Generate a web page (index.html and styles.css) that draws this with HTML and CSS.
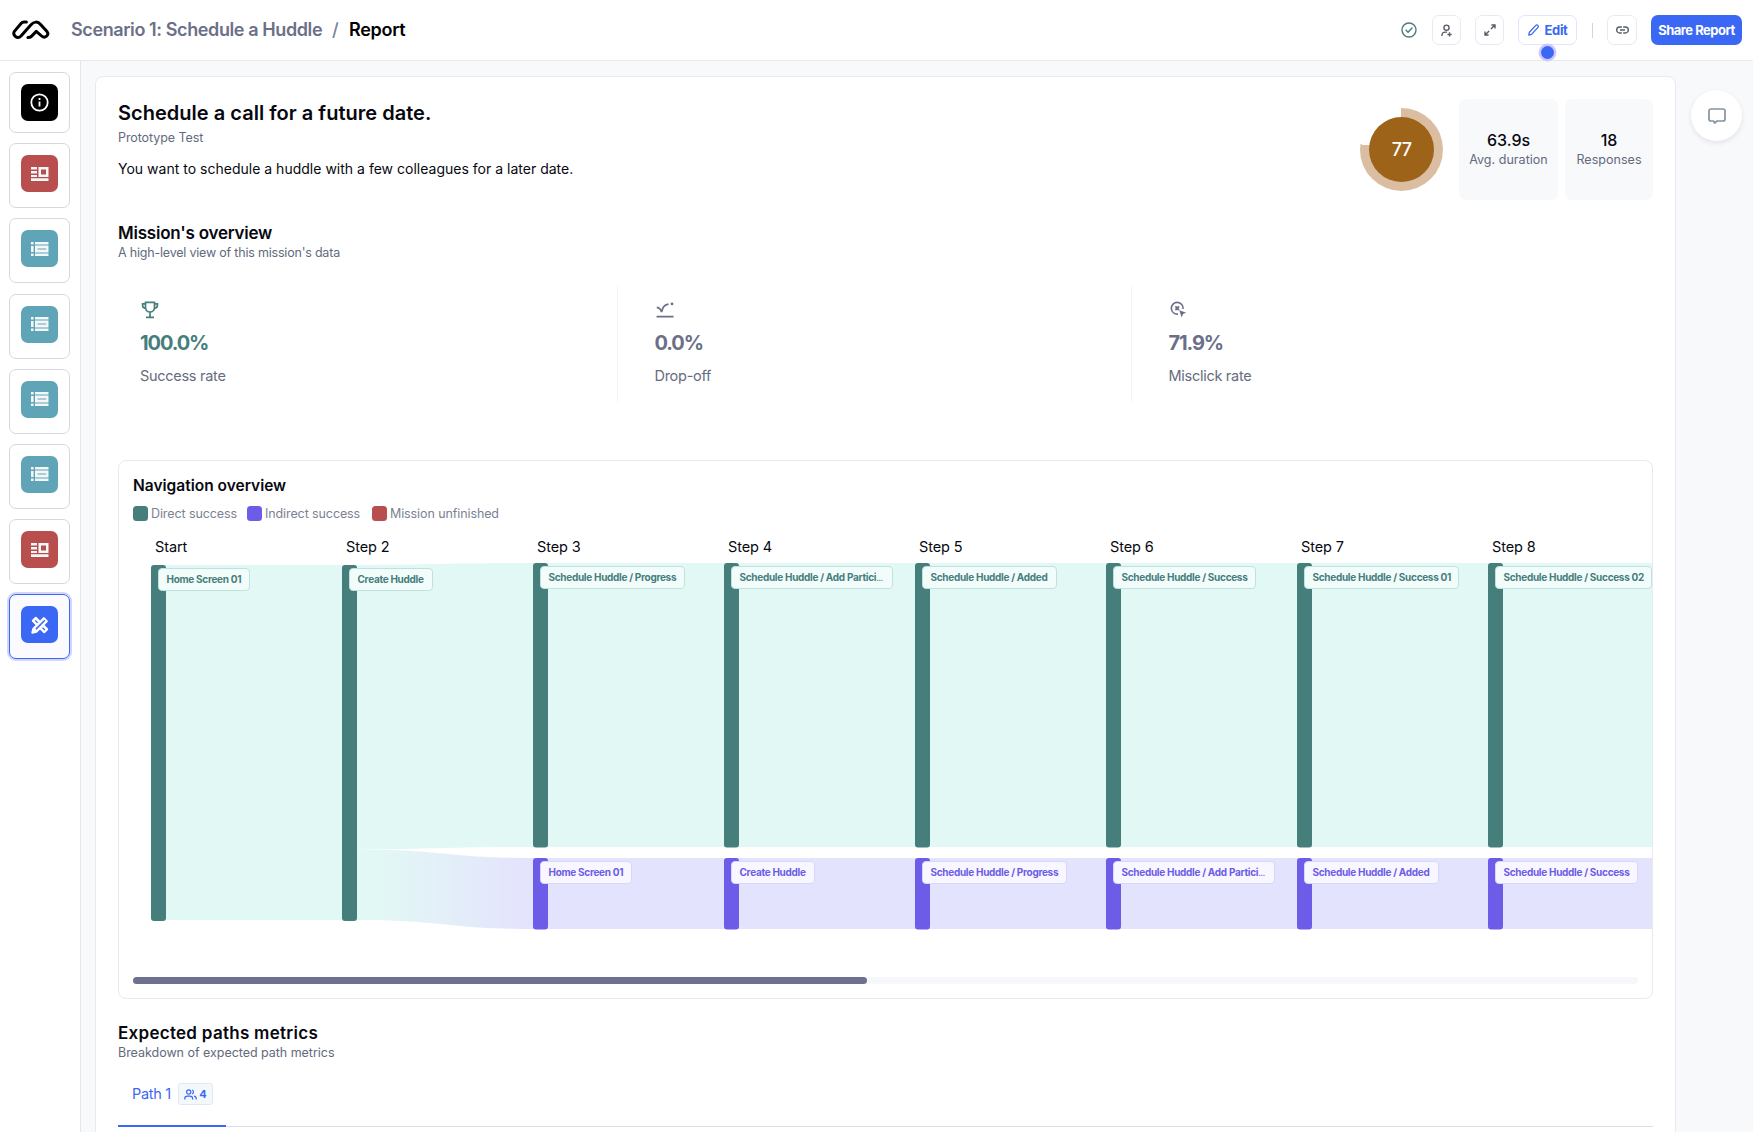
FILE: index.html
```html
<!DOCTYPE html>
<html lang="en">
<head>
<meta charset="utf-8">
<title>Scenario 1: Schedule a Huddle / Report</title>
<link rel="stylesheet" href="styles.css">
</head>
<body>
<svg class="defs" width="0" height="0" aria-hidden="true">
  <symbol id="i-context" viewBox="0 0 18 14"><path d="M0 0h6v2.6H0zM0 4h6v2.6H0zM0 8h6v2H0zM0 11.2h17.500V14H0z"/><path fill-rule="evenodd" d="M7.500 0h10v10h-10zM10 2.600v4.800h5V2.600z"/></symbol>
  <symbol id="i-list" viewBox="0 0 18 14"><path d="M0 0h2.6v2.6H0zM4 0h13.500v2.600H4zM0 4h2.600v6H0zM0 11.400h2.600V14H0zM4 11.400h13.500V14H4z"/><path fill-rule="evenodd" d="M4 3.600h13.500v6.800H4zM6.500 6.400v1.200h8.800V6.400z"/></symbol>
</svg>

<header class="topbar">
  <svg class="logo" viewBox="0 0 38 20" fill="none" stroke="#000" stroke-width="3" stroke-linecap="round" stroke-linejoin="round"><path d="M14.4 2.1 H12.2 C10.7 2.1 9.8 2.6 8.8 3.8 L2.6 11.1 C-.4 14.6 5.2 19.8 9 16 L19 4.8 C21.8 1.4 25.8 1.2 28.6 4.4 L35 11.6 C37.6 15 33 19 29.6 16 L24.3 11.4 L19.4 16.4 C18.4 17.4 17.6 17.6 15.9 17.6"/></svg>
  <nav class="crumbs"><span class="crumb-link">Scenario 1: Schedule a Huddle</span><span class="crumb-sep">/</span><span class="crumb-now">Report</span></nav>
  <div class="actions">
    <svg class="saved" viewBox="0 0 16 16" fill="none" stroke="#467e7c" stroke-width="1.4" stroke-linecap="round" stroke-linejoin="round"><circle cx="8" cy="8" r="7"/><path d="M5 8.3l2.1 2L11 6"/></svg>
    <button class="btn people"><svg width="11" height="13" viewBox="0 0 12 14" fill="none" stroke="#565c68" stroke-width="1.5"><circle cx="6" cy="3.9" r="2.8"/><path d="M1 13v-.8C1 10 2.6 8.800 5 8.800h1.600M9.300 9v4.600M7 11.300h4.600"/></svg></button>
    <button class="btn expand"><svg width="12" height="12" viewBox="0 0 12 12" fill="none" stroke="#565c68" stroke-width="1.4"><path d="M7.400 1H11v3.600M11 1L6.900 5.100M4.600 11H1V7.400M1 11l4.100-4.100"/></svg></button>
    <button class="btn edit"><svg width="11" height="12" viewBox="0 0 11 12" fill="none" stroke="#3b67f5" stroke-width="1.3" stroke-linejoin="round"><path d="M.8 11.200l.6-3L7.800 1.400c.7-.8 1.600-.6 2.100 0 .6.6.6 1.400 0 2L3.600 10.400z"/></svg><span>Edit</span><i class="pulse"></i></button>
    <i class="divider"></i>
    <button class="btn link"><svg width="13" height="8" viewBox="0 0 13 8" fill="none" stroke="#565c68" stroke-width="1.4"><path d="M5.800 1H3.700a3 3 0 000 6h2.100M7.200 1h2.100a3 3 0 010 6H7.200M4 4h5"/></svg></button>
    <button class="share"><span>Share Report</span></button>
  </div>
</header>

<div class="body">
  <aside class="rail">
    <a class="block first"><span class="tile black"><svg width="19" height="19" viewBox="0 0 19 19" fill="none" stroke="#fff" stroke-width="1.8"><circle cx="9.5" cy="9.5" r="8.2"/><path d="M9.500 8.400v5.200M9.500 5v2"/></svg></span></a>
    <a class="block"><span class="tile red"><svg width="18" height="14"><use href="#i-context"/></svg></span></a>
    <a class="block"><span class="tile teal"><svg width="18" height="14"><use href="#i-list"/></svg></span></a>
    <a class="block"><span class="tile teal"><svg width="18" height="14"><use href="#i-list"/></svg></span></a>
    <a class="block"><span class="tile teal"><svg width="18" height="14"><use href="#i-list"/></svg></span></a>
    <a class="block"><span class="tile teal"><svg width="18" height="14"><use href="#i-list"/></svg></span></a>
    <a class="block"><span class="tile red"><svg width="18" height="14"><use href="#i-context"/></svg></span></a>
    <a class="block active"><span class="tile blue"><svg width="18" height="18" viewBox="0 0 18 18" fill="none" stroke="#fff" stroke-linejoin="round"><path stroke-width="2" d="M1.800 4.800L4.800 1.800L16.200 13.200L13.200 16.200z" fill="#fff"/><path stroke="#3b67f5" stroke-width="1.300" d="M4.200 4.400l2.600 2.600M11.500 11.600l2.400 2.400"/><path stroke-width="2.200" d="M12.800 2.200l3 3L5.300 15.600l-3.900 1 1-3.900z" fill="#fff"/><path stroke="#3b67f5" stroke-width="1.500" d="M13.800 4.300L5 13.100"/></svg></span></a>
  </aside>

  <main class="main">
    <article class="card">
      <section class="intro">
        <div class="intro-text">
          <h1>Schedule a call for a future date.</h1>
          <p class="kind">Prototype Test</p>
          <p class="brief">You want to schedule a huddle with a few colleagues for a later date.</p>
        </div>
        <div class="score"><b>77</b></div>
        <div class="stat duration"><strong>63.9s</strong><span>Avg. duration</span></div>
        <div class="stat responses"><strong>18</strong><span>Responses</span></div>
      </section>

      <h2 class="mission">Mission's overview</h2>
      <p class="sub mission-sub">A high-level view of this mission's data</p>

      <section class="metrics">
        <div class="metric success">
          <svg width="18" height="18" viewBox="0 0 18 18" fill="none" stroke="#467e7c" stroke-width="1.7"><path d="M4.500 1.300h9v5.200a4.500 4.500 0 01-9 0zM4.500 2.800H1.600v1.400c0 2 1.200 3 3 3.100M13.500 2.800h2.900v1.400c0 2-1.200 3-3 3.100M9 11v5M5 16.300h8"/></svg>
          <strong>100.0%</strong><span>Success rate</span>
        </div>
        <div class="metric">
          <svg width="18" height="18" viewBox="0 0 18 18" fill="none" stroke="#6b6f88" stroke-width="1.7"><path d="M.5 15.600h17M.8 6.400c2.400.4 4 1.800 4.800 4.600C6.400 6.500 8 3.600 12.500 3.100"/><circle cx="16" cy="2.900" r="1.400" fill="#6b6f88" stroke="none"/></svg>
          <strong>0.0%</strong><span>Drop-off</span>
        </div>
        <div class="metric">
          <svg width="18" height="18" viewBox="0 0 18 18" fill="none" stroke="#6b6f88" stroke-width="1.600"><path d="M8 13.100A5.900 5.900 0 1113.100 8"/><path d="M5.400 5.400l3.600 3.600M9 5.400L5.400 9" stroke-width="1.800"/><path d="M9.200 9.200l7 2.600-3.200 1.300-1.300 3.400z" fill="#6b6f88" stroke="none"/></svg>
          <strong>71.9%</strong><span>Misclick rate</span>
        </div>
      </section>

      <section class="nav-card">
        <h3>Navigation overview</h3>
        <ul class="legend">
          <li class="direct"><i></i><span>Direct success</span></li>
          <li class="indirect"><i></i><span>Indirect success</span></li>
          <li class="unfinished"><i></i><span>Mission unfinished</span></li>
        </ul>
        <div class="flow">
          <svg class="bands" width="1520" height="380" viewBox="0 0 1520 380">
            <defs><linearGradient id="shift"><stop offset="0" stop-color="#e2f8f5"/><stop offset=".12" stop-color="#e2f8f5"/><stop offset="1" stop-color="#e4e3fd"/></linearGradient></defs>
            <path fill="#e2f8f5" d="M25 4H209V359H25zM209 4C305 4 305 2 400 2H1520V286H400C305 286 305 288.500 209 288.500z"/>
            <path fill="url(#shift)" d="M224 288.500C312 288.500 312 297 400 297V368C312 368 312 359 224 359z"/>
            <path fill="#e4e3fd" d="M400 297H1520V368H400z"/>
            <g fill="#467e7c">
              <rect x="18" y="4" width="15" height="356" rx="3"/><rect x="209" y="4" width="15" height="356" rx="3"/>
              <rect x="400" y="2" width="15" height="284.500" rx="3"/><rect x="591" y="2" width="15" height="284.500" rx="3"/><rect x="782" y="2" width="15" height="284.500" rx="3"/><rect x="973" y="2" width="15" height="284.500" rx="3"/><rect x="1164" y="2" width="15" height="284.500" rx="3"/><rect x="1355" y="2" width="15" height="284.500" rx="3"/>
            </g>
            <g fill="#6c5ce7">
              <rect x="400" y="297" width="15" height="71.500" rx="3"/><rect x="591" y="297" width="15" height="71.500" rx="3"/><rect x="782" y="297" width="15" height="71.500" rx="3"/><rect x="973" y="297" width="15" height="71.500" rx="3"/><rect x="1164" y="297" width="15" height="71.500" rx="3"/><rect x="1355" y="297" width="15" height="71.500" rx="3"/>
            </g>
          </svg>
          <div class="step"><span class="step-name">Start</span><span class="tag low" style="width:92px">Home Screen 01</span></div>
          <div class="step"><span class="step-name">Step 2</span><span class="tag low" style="width:84px">Create Huddle</span></div>
          <div class="step"><span class="step-name">Step 3</span><span class="tag" style="width:145px">Schedule Huddle / Progress</span><span class="tag alt" style="width:92px">Home Screen 01</span></div>
          <div class="step"><span class="step-name">Step 4</span><span class="tag" style="width:162px">Schedule Huddle / Add Partici<small>...</small></span><span class="tag alt" style="width:84px">Create Huddle</span></div>
          <div class="step"><span class="step-name">Step 5</span><span class="tag" style="width:135px">Schedule Huddle / Added</span><span class="tag alt" style="width:145px">Schedule Huddle / Progress</span></div>
          <div class="step"><span class="step-name">Step 6</span><span class="tag" style="width:143px">Schedule Huddle / Success</span><span class="tag alt" style="width:162px">Schedule Huddle / Add Partici<small>...</small></span></div>
          <div class="step"><span class="step-name">Step 7</span><span class="tag" style="width:155px">Schedule Huddle / Success 01</span><span class="tag alt" style="width:135px">Schedule Huddle / Added</span></div>
          <div class="step"><span class="step-name">Step 8</span><span class="tag" style="width:157px">Schedule Huddle / Success 02</span><span class="tag alt" style="width:143px">Schedule Huddle / Success</span></div>
        </div>
        <div class="scroll"><i></i></div>
      </section>

      <h2 class="expected">Expected paths metrics</h2>
      <p class="sub">Breakdown of expected path metrics</p>
      <div class="tabs">
        <a class="tab"><span>Path 1</span><em><svg width="13" height="11" viewBox="0 0 13 11" fill="none" stroke="#3b67f5" stroke-width="1.200"><circle cx="4.700" cy="3" r="2.100"/><path d="M8 1a2.100 2.100 0 010 4M.8 10.500V9.400c0-1.400 1.200-2.200 2.700-2.200h2.400c1.500 0 2.700.8 2.700 2.200v1.100M10 7.200c1.500.2 2.200 1 2.200 2.200v1.100"/></svg>4</em></a>
      </div>
    </article>
    <button class="chat"><svg width="18" height="16" viewBox="0 0 18 16" fill="none" stroke="#87939f" stroke-width="1.700" stroke-linejoin="round"><path d="M3 1h12a2 2 0 012 2v8a2 2 0 01-2 2H9l-2.300 2L5.500 13H3a2 2 0 01-2-2V3a2 2 0 012-2z"/></svg></button>
  </main>
</div>
</body>
</html>
```
FILE: styles.css
```css
* { box-sizing: border-box; margin: 0; padding: 0; }
html, body { height: 1132px; overflow: hidden; }
body { font-family: Inter, "Liberation Sans", sans-serif; color: #07080f; background: #fff; display: flex; flex-direction: column; white-space: nowrap; }
button { font: inherit; background: #fff; border: 1px solid #e8eaf0; border-radius: 7px; display: flex; align-items: center; justify-content: center; }
a { color: inherit; }
.defs { position: absolute; }
svg { display: block; flex: none; }

.topbar { height: 61px; flex: none; border-bottom: 1px solid #e8e9ef; display: flex; align-items: center; padding: 0 11px 0 12px; }
.logo { width: 38px; height: 20px; margin-right: 21px; }
.crumbs { display: flex; font-size: 18px; font-weight: 600; line-height: 24px; }
.crumb-link { color: #6b7088; width: 261px; letter-spacing: -.4px; }
.crumb-sep { color: #7d8399; width: 17px; font-weight: 500; }
.crumb-now { color: #000; letter-spacing: -.3px; }
.actions { margin-left: auto; display: flex; align-items: center; }
.saved { width: 16px; height: 16px; margin-right: 15px; }
.btn { height: 30px; }
.people { width: 29px; margin-right: 14px; }
.expand { width: 29px; margin-right: 14px; }
.edit { position: relative; width: 59px; gap: 6px; border-color: #dde6fd; color: #3b67f5; font-size: 13px; font-weight: 700; letter-spacing: -.4px; }
.pulse { position: absolute; left: 22px; top: 30px; width: 13px; height: 13px; border-radius: 50%; background: #3b67f5; box-shadow: 0 0 0 2.500px #cfc9fb; }
.divider { width: 1px; height: 15px; background: #d3d5de; margin: 0 14px 0 15px; }
.link { width: 30px; margin-right: 14px; }
.share { width: 91px; height: 30px; background: #3b67f5; border: 0; color: #fff; font-size: 13px; font-weight: 700; letter-spacing: -.5px; }

.body { flex: 1; display: flex; min-height: 0; }
.rail { width: 81px; flex: none; border-right: 1px solid #e5e6ee; padding: 11px 0 0 9px; display: flex; flex-direction: column; gap: 10.200px; }
.block { width: 61px; height: 65px; border: 1px solid #d7d7e2; border-radius: 7px; display: flex; justify-content: center; align-items: flex-start; padding-top: 11px; flex: none; }
.block.first { height: 61px; }
.block.active { border-color: #3b67f5; box-shadow: 0 0 0 2px #d3d5fb; background: #fafaff; }
.tile { width: 37px; height: 37px; border-radius: 7px; display: flex; align-items: center; justify-content: center; fill: #f3f7f8; }
.black { background: #000; }
.red { background: #b94e4f; }
.teal { background: #5fa4b7; }
.blue { background: #3b67f5; }

.main { flex: 1; background: #f8f9fb; display: flex; align-items: flex-start; padding: 15px 10px 0 14px; }
.card { width: 1581px; height: 1100px; flex: none; background: #fff; border: 1px solid #e9eaf0; border-radius: 8px; padding: 22px 22px 0 22px; }
.chat { width: 51px; height: 51px; border: 0; border-radius: 50%; margin: 14px 0 0 15px; flex: none; box-shadow: 0 2px 5px rgba(40, 40, 80, .1); }

.intro { display: flex; height: 101px; }
.intro-text { flex: 1; }
h1 { font-size: 20px; font-weight: 600; line-height: 28px; letter-spacing: .02px; }
.kind { font-size: 12.500px; line-height: 18px; color: #626a7d; margin-top: 2px; letter-spacing: -.08px; }
.brief { font-size: 14px; line-height: 20px; margin-top: 12px; letter-spacing: .01px; }
.score { width: 83px; height: 83px; border-radius: 50%; margin: 9px 16px 0 0; background: conic-gradient(#dbbea1 0 77%, transparent 77%); display: grid; place-items: center; }
.score b { width: 65px; height: 65px; border-radius: 50%; background: #9d6319; color: #fff; font-size: 18px; font-weight: 500; letter-spacing: -.6px; display: grid; place-items: center; }
.stat { height: 101px; border-radius: 7px; background: #f8f9fb; display: flex; flex-direction: column; align-items: center; padding-top: 31px; }
.stat strong { font-size: 16px; font-weight: 450; line-height: 20px; }
.stat span { font-size: 12.500px; line-height: 20px; color: #626a7d; letter-spacing: .03px; }
.duration { width: 99px; margin-right: 7px; }
.responses { width: 88px; }

h2 { font-size: 17px; font-weight: 600; line-height: 22px; }
.mission { margin-top: 22px; letter-spacing: -.22px; }
.sub { font-size: 12.500px; line-height: 18px; color: #626a7d; letter-spacing: -.03px; }
.mission-sub { letter-spacing: -.2px; }

.metrics { display: grid; grid-template-columns: 499px 514px 1fr; height: 118px; margin-top: 23px; }
.metric { padding: 16px 0 0 36.500px; border-left: 1px solid #f3f4f7; color: #6b6f88; display: flex; flex-direction: column; }
.metric.success { padding-left: 22px; border: 0; color: #467e7c; }
.metric svg { margin-left: 1px; }
.metric strong { font-size: 20px; font-weight: 700; line-height: 26px; margin-top: 11px; letter-spacing: -1.100px; }
.metric span { font-size: 14.500px; line-height: 20px; margin-top: 10px; color: #666c7e; letter-spacing: -.28px; }

.nav-card { margin-top: 57px; height: 539px; border: 1px solid #e9eaf0; border-radius: 8px; padding: 14px 0 0 14px; overflow: hidden; }
h3 { font-size: 15.500px; font-weight: 600; line-height: 22px; }
.legend { list-style: none; display: flex; height: 15px; margin-top: 9px; font-size: 12.500px; line-height: 15px; color: #7c8194; letter-spacing: -.1px; }
.legend li { display: flex; gap: 3px; }
.legend i { width: 15px; height: 15px; border-radius: 3.500px; }
.direct { width: 114px; }
.indirect { width: 125px; }
.direct i { background: #467e7c; }
.indirect i { background: #6c5ce7; }
.unfinished i { background: #b94e4f; }

.flow { position: relative; width: 1520px; height: 421px; margin-top: 15px; padding-left: 18px; display: grid; grid-template-columns: repeat(8, 191px); }
.bands { position: absolute; left: 0; top: 25px; }
.step { position: relative; }
.step-name { display: block; padding-left: 4px; font-size: 14.500px; line-height: 22px; letter-spacing: -.1px; }
.tag { position: absolute; left: 7px; top: 30px; height: 23px; padding-left: 7.500px; border: 1px solid #bfe2e0; border-radius: 4px; background: #f1fcfb; color: #467e7c; font-size: 10px; font-weight: 700; line-height: 21px; letter-spacing: -.3px; }
.tag small { font-size: 10px; font-weight: 400; letter-spacing: -.7px; }
.tag.low { top: 32px; }
.tag.alt { top: 325px; border-color: #d9d6fc; background: #f8f7ff; color: #6c5ce7; }
.scroll { width: 1505px; height: 7px; border-radius: 4px; background: #f7f8fb; margin-top: 20px; }
.scroll i { display: block; width: 734px; height: 7px; border-radius: 4px; background: #6d718d; }

.expected { margin-top: 23px; letter-spacing: .28px; }
.tabs { display: flex; height: 49px; margin-top: 16px; border-bottom: 1px solid #dcdde8; }
.tab { width: 108px; height: 49px; border-bottom: 2px solid #3b67f5; color: #3b67f5; font-size: 14.500px; padding-left: 14px; display: flex; align-items: flex-start; line-height: 22px; }
.tab span { width: 46px; padding-top: 5px; letter-spacing: -.3px; }
.tab em { margin-top: 5px; width: 35px; height: 22px; border: 1px solid #dfe9f5; border-radius: 3px; background: #f3f8fd; font-size: 11px; font-style: normal; font-weight: 700; line-height: 20px; display: flex; align-items: center; justify-content: center; gap: 2px; }
```
